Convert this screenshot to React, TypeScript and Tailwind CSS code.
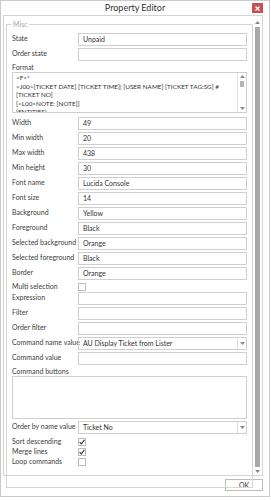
import React from "react";

const FONT = { fontFamily: 'Lato, "Open Sans", Arial, sans-serif' };

function Up() {
  return (
    <svg width="5" height="3" viewBox="0 0 5 3">
      <path d="M0 3 L2.5 0 L5 3 Z" fill="#8a8a8a" />
    </svg>
  );
}

function Down() {
  return (
    <svg width="5" height="3" viewBox="0 0 5 3">
      <path d="M0 0 L2.5 3 L5 0 Z" fill="#8a8a8a" />
    </svg>
  );
}

function TextRow({ label, value }: { label: string; value?: string }) {
  return (
    <div className="flex h-[15px] items-start">
      <div className="w-[66px] shrink-0 whitespace-nowrap pt-[1px] text-[7px] leading-[9px] text-[#3c3c3c]">{label}</div>
      <div className="flex h-[13px] min-w-0 flex-1 items-center border border-[#cfcfcf] px-[4px] text-[7px] text-[#333]">
        {value}
      </div>
    </div>
  );
}

function ComboRow({ label, value }: { label: string; value: string }) {
  return (
    <div className="flex h-[15px] items-start">
      <div className="w-[66px] shrink-0 whitespace-nowrap pt-[1px] text-[7px] leading-[9px] text-[#3c3c3c]">{label}</div>
      <div className="flex h-[13px] min-w-0 flex-1 items-center border border-[#cfcfcf] text-[7px] text-[#333]">
        <div className="flex-1 whitespace-nowrap px-[4px]">{value}</div>
        <div className="flex h-full w-[9px] items-center justify-center border-l border-[#dcdcdc]">
          <Down />
        </div>
      </div>
    </div>
  );
}

function CheckRow({ label, checked }: { label: string; checked?: boolean }) {
  return (
    <div className="flex h-[10px] items-start">
      <div className="w-[66px] shrink-0 whitespace-nowrap text-[7px] leading-[9px] text-[#3c3c3c]">{label}</div>
      <div className="mt-[1px] flex h-[8px] w-[8px] items-center justify-center border border-[#bdbdbd] bg-white">
        {checked && (
          <svg width="6" height="6" viewBox="0 0 6 6">
            <path d="M0.6 3.2 L2.3 4.9 L5.4 0.8" stroke="#333" strokeWidth="1.1" fill="none" />
          </svg>
        )}
      </div>
    </div>
  );
}

export default function App() {
  const formatLines = [
    "<F>*",
    "<J00>[TICKET DATE] [TICKET TIME]| [USER NAME] [TICKET TAG:SG] #",
    "[TICKET NO]",
    "[<L00>NOTE: [NOTE]]",
    "{ENTITIES}",
  ];

  return (
    <div className="h-[500px] w-[271px] overflow-hidden bg-white" style={FONT}>
      <div className="flex h-[497px] w-[270px] flex-col border border-[#cacaca] bg-white">
        {/* Title bar */}
        <div className="relative flex h-[14px] shrink-0 items-center justify-center">
          <span className="text-[9px] text-[#333]">Property Editor</span>
          <div className="absolute right-[6px] top-[2px] flex h-[10px] w-[11px] items-center justify-center bg-[#c75050]">
            <svg width="5" height="5" viewBox="0 0 5 5">
              <path d="M0.5 0.5 L4.5 4.5 M4.5 0.5 L0.5 4.5" stroke="#fff" strokeWidth="1.2" />
            </svg>
          </div>
        </div>

        {/* Main panel */}
        <div className="ml-[2px] mr-[6px] flex h-[461px] shrink-0 border border-[#d4d4d4]">
          <div className="flex-1 pl-[2px] pt-[8px]">
            <div className="relative h-[464px] border border-[#d6d6d6] px-[5px] pt-[8px]">
              <span className="absolute left-[5px] top-[-5px] bg-white px-[1px] text-[7px] leading-[8px] text-[#a8a8a8]">
                Misc
              </span>
              <div className="flex flex-col">
                <TextRow label="State" value="Unpaid" />
                <TextRow label="Order state" />
                <div className="h-[9px] text-[7px] leading-[9px] text-[#3c3c3c]">Format</div>
                <div className="mb-[4px] flex h-[41px] border border-[#cfcfcf]">
                  <div className="flex-1 overflow-hidden px-[3px] pt-[1px] text-[6.4px] leading-[8.5px] text-[#333]">
                    {formatLines.map((l, i) => (
                      <div key={i} className="whitespace-nowrap">{l}</div>
                    ))}
                  </div>
                  <div className="flex w-[9px] flex-col items-center border-l border-[#e0e0e0] py-[2px]">
                    <Up />
                    <div className="mt-[3px] h-[6px] w-[4px] bg-[#b5b5b5]" />
                    <div className="flex-1" />
                    <Down />
                  </div>
                </div>
                <TextRow label="Width" value="49" />
                <TextRow label="Min width" value="20" />
                <TextRow label="Max width" value="438" />
                <TextRow label="Min height" value="30" />
                <TextRow label="Font name" value="Lucida Console" />
                <TextRow label="Font size" value="14" />
                <TextRow label="Background" value="Yellow" />
                <TextRow label="Foreground" value="Black" />
                <TextRow label="Selected background" value="Orange" />
                <TextRow label="Selected foreground" value="Black" />
                <TextRow label="Border" value="Orange" />
                <CheckRow label="Multi selection" />
                <TextRow label="Expression" />
                <TextRow label="Filter" />
                <TextRow label="Order filter" />
                <ComboRow label="Command name value" value="AU Display Ticket from Lister" />
                <TextRow label="Command value" />
                <div className="h-[9px] text-[7px] leading-[9px] text-[#3c3c3c]">Command buttons</div>
                <div className="mb-[2px] h-[43px] border border-[#cfcfcf]" />
                <ComboRow label="Order by name value" value="Ticket No" />
                <div className="h-[1px]" />
                <CheckRow label="Sort descending" checked />
                <CheckRow label="Merge lines" checked />
                <CheckRow label="Loop commands" />
              </div>
            </div>
          </div>
          {/* Scrollbar */}
          <div className="flex w-[9px] flex-col items-center pb-[2px] pt-[5px]">
            <Up />
            <div className="mt-[3px] w-[5px] flex-1 bg-[#a9a9a9]" />
            <div className="mt-[3px]">
              <Down />
            </div>
          </div>
        </div>

        {/* Footer */}
        <div className="flex flex-1 items-start justify-end pr-[6px] pt-[3px]">
          <div className="flex h-[12px] w-[38px] items-center justify-center border border-[#bcbcbc] bg-white text-[7px] text-[#333]">
            OK
          </div>
        </div>
      </div>
    </div>
  );
}
